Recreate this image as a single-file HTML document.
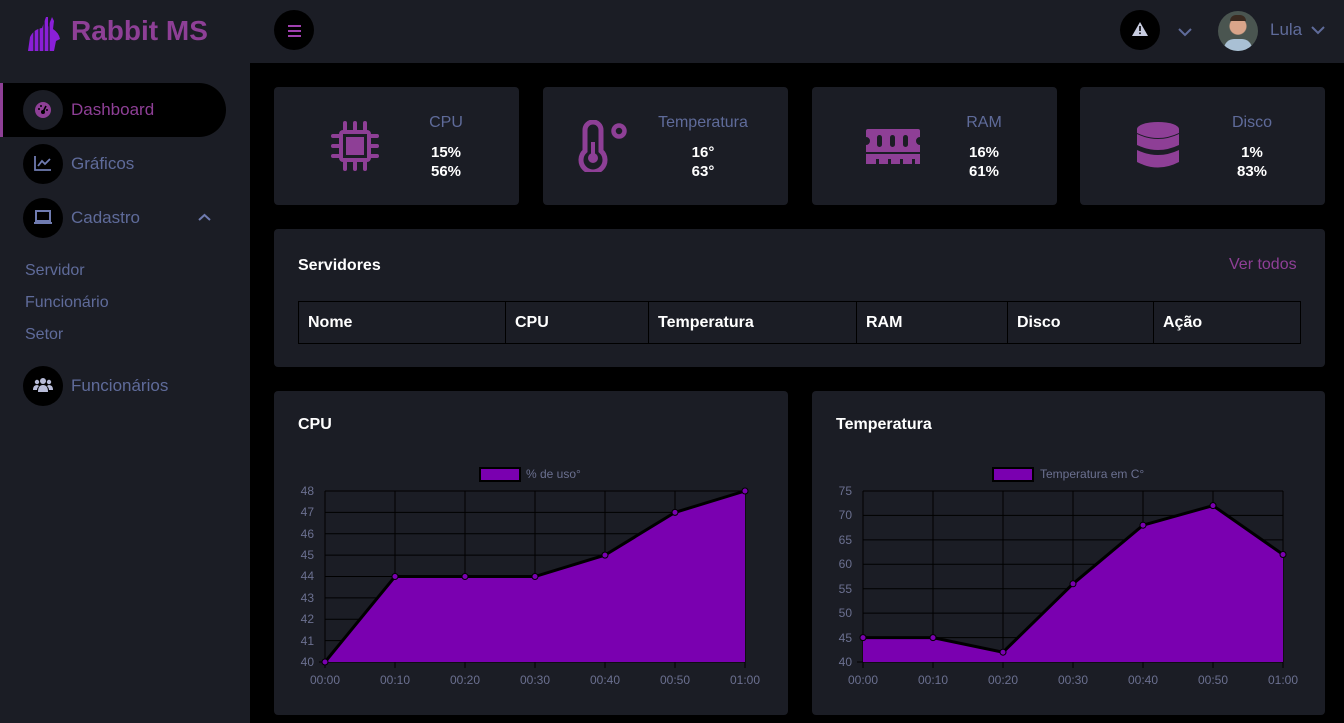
<!DOCTYPE html>
<html><head><meta charset="utf-8"><style>
*{margin:0;padding:0;box-sizing:border-box}
body{width:1344px;height:723px;overflow:hidden;background:#1b1d25;font-family:"Liberation Sans",sans-serif;position:relative}
.a{position:absolute}
.main{left:250px;top:63px;width:1094px;height:660px;background:#000}
.card{background:#1b1d25;border-radius:4px}
.circ{border-radius:50%;background:#000}
.nav{color:#5f6b9a;font-size:17px}
.lbl{color:#5f6b9a;font-size:16px;text-align:center;width:120px}
.val{color:#fff;font-weight:bold;font-size:15px;text-align:center;width:120px;line-height:19px}
th{color:#fff;font-size:16px;text-align:left;font-weight:bold;border:1px solid #000;padding-left:9px;height:42px}
</style></head><body>
<!-- logo -->
<svg class="a" style="left:26px;top:13px" width="36" height="40" viewBox="0 0 36 40"><path d="M2 38 L4 24 Q8 16 16 15 L20 4 L22 4 L22 14 L26 4 L28 8 L27 16 Q33 20 34 26 L30 28 L28 38 Z" fill="#8a1fd8"/><g stroke="#1b1d25" stroke-width="1.3"><line x1="8" y1="16" x2="8" y2="40"/><line x1="13" y1="12" x2="13" y2="40"/><line x1="18" y1="4" x2="18" y2="40"/><line x1="23" y1="4" x2="23" y2="40"/></g></svg>
<div class="a" style="left:71px;top:15px;font-size:28px;font-weight:bold;color:#8e3f96">Rabbit MS</div>
<div class="a circ" style="left:274px;top:10px;width:40px;height:40px"></div>
<div class="a" style="left:288px;top:25px;width:13px;height:2px;background:#a040b0;box-shadow:0 5px 0 #a040b0,0 10px 0 #a040b0"></div>
<!-- top right -->
<div class="a circ" style="left:1120px;top:10px;width:40px;height:40px"></div>
<svg class="a" style="left:1131px;top:21px" width="18" height="16" viewBox="0 0 18 16"><path d="M9 1 L17 15 L1 15 Z" fill="#c8cce0"/><rect x="8.2" y="5" width="1.6" height="5" fill="#000"/><rect x="8.2" y="11.5" width="1.6" height="1.6" fill="#000"/></svg>
<svg class="a" style="left:1178px;top:28px" width="14" height="9"><path d="M1 1 L7 7 L13 1" stroke="#5f6b9a" stroke-width="2" fill="none"/></svg>
<div class="a" style="left:1218px;top:11px;width:40px;height:40px;border-radius:50%;background:radial-gradient(circle at 50% 38%,#d9a58a 0 8px,#4a5550 9px);overflow:hidden"><div style="position:absolute;left:6px;top:28px;width:28px;height:14px;border-radius:10px 10px 0 0;background:#a9c0d4"></div><div style="position:absolute;left:12px;top:4px;width:16px;height:6px;border-radius:6px 6px 0 0;background:#3a2a20"></div></div>
<div class="a nav" style="left:1270px;top:20px">Lula</div>
<svg class="a" style="left:1311px;top:26px" width="14" height="9"><path d="M1 1 L7 7 L13 1" stroke="#5f6b9a" stroke-width="2" fill="none"/></svg>
<!-- sidebar -->
<div class="a" style="left:0;top:83px;width:226px;height:54px;background:#000;border-radius:0 27px 27px 0;border-left:3px solid #8e3f96"></div>
<div class="a circ" style="left:23px;top:90px;width:40px;height:40px;background:#1b1d25"></div>
<svg class="a" style="left:34px;top:101px" width="18" height="18" viewBox="0 0 18 18"><circle cx="9" cy="9" r="8" fill="#8e3f96"/><circle cx="9" cy="11" r="2" fill="#000"/><line x1="9" y1="11" x2="12" y2="5" stroke="#000" stroke-width="1.6"/><circle cx="5" cy="8" r="1" fill="#000"/><circle cx="7" cy="5" r="1" fill="#000"/><circle cx="13" cy="9" r="1" fill="#000"/></svg>
<div class="a" style="left:71px;top:100px;font-size:17px;color:#8e3f96">Dashboard</div>
<div class="a circ" style="left:23px;top:144px;width:40px;height:40px"></div>
<svg class="a" style="left:34px;top:155px" width="18" height="16"><path d="M1 1 V15 H17 M4 11 L8 6 L11 9 L16 4" stroke="#6f7bb0" stroke-width="1.8" fill="none"/></svg>
<div class="a nav" style="left:71px;top:154px">Gráficos</div>
<div class="a circ" style="left:23px;top:198px;width:40px;height:40px"></div>
<svg class="a" style="left:33px;top:210px" width="20" height="15"><rect x="3" y="1" width="14" height="10" stroke="#6f7bb0" stroke-width="2" fill="none"/><rect x="1" y="12" width="18" height="2" fill="#6f7bb0"/></svg>
<div class="a nav" style="left:71px;top:208px">Cadastro</div>
<svg class="a" style="left:198px;top:213px" width="13" height="9"><path d="M1 7 L6.5 2 L12 7" stroke="#6f7bb0" stroke-width="2" fill="none"/></svg>
<div class="a nav" style="left:25px;top:262px;font-size:16px">Servidor</div>
<div class="a nav" style="left:25px;top:294px;font-size:16px">Funcionário</div>
<div class="a nav" style="left:25px;top:326px;font-size:16px">Setor</div>
<div class="a circ" style="left:23px;top:366px;width:40px;height:40px"></div>
<svg class="a" style="left:33px;top:377px" width="20" height="16" viewBox="0 0 20 16"><circle cx="10" cy="4" r="3" fill="#b8bcd8"/><circle cx="4" cy="5" r="2.2" fill="#b8bcd8"/><circle cx="16" cy="5" r="2.2" fill="#b8bcd8"/><path d="M5 15 Q5 8 10 8 Q15 8 15 15Z M0 13 Q0 8 4 8 Q5 8 6 9 Q4 11 4 13Z M20 13 Q20 8 16 8 Q15 8 14 9 Q16 11 16 13Z" fill="#b8bcd8"/></svg>
<div class="a nav" style="left:71px;top:376px">Funcionários</div>
<!-- main -->
<div class="a main"></div>
<div class="a card" style="left:274px;top:87px;width:245px;height:118px"></div>
<div class="a card" style="left:543px;top:87px;width:245px;height:118px"></div>
<div class="a card" style="left:812px;top:87px;width:245px;height:118px"></div>
<div class="a card" style="left:1080px;top:87px;width:245px;height:118px"></div>
<!-- cpu icon -->
<svg class="a" style="left:331px;top:121px" width="48" height="50" viewBox="0 0 48 50"><g fill="#8e3f96"><rect x="8" y="9" width="32" height="32" rx="4"/><rect x="12" y="0" width="4" height="50" rx="2"/><rect x="22" y="0" width="4" height="50" rx="2"/><rect x="32" y="0" width="4" height="50" rx="2"/><rect x="0" y="13" width="48" height="4" rx="2"/><rect x="0" y="23" width="48" height="4" rx="2"/><rect x="0" y="33" width="48" height="4" rx="2"/></g><rect x="12" y="13" width="24" height="24" fill="#1b1d25"/><rect x="15" y="16" width="18" height="18" fill="#8e3f96"/></svg>
<div class="a lbl" style="left:386px;top:114px">CPU</div>
<div class="a val" style="left:386px;top:143px">15%<br>56%</div>
<!-- thermo -->
<svg class="a" style="left:575px;top:120px" width="54" height="52" viewBox="0 0 54 52"><path d="M10 31 V10 a8 8 0 0 1 16 0 V31 a12 12 0 1 1 -16 0Z" stroke="#8e3f96" stroke-width="5" fill="none"/><circle cx="18" cy="38" r="5" fill="#8e3f96"/><rect x="16" y="22" width="4" height="16" fill="#8e3f96"/><circle cx="44" cy="11" r="5.5" stroke="#8e3f96" stroke-width="4.5" fill="none"/></svg>
<div class="a lbl" style="left:643px;top:114px">Temperatura</div>
<div class="a val" style="left:643px;top:143px">16°<br>63°</div>
<!-- ram -->
<svg class="a" style="left:865px;top:127px" width="56" height="38" viewBox="0 0 56 38"><path d="M3 2 H53 a2 2 0 0 1 2 2 V10 a4 4 0 0 0 0 8 V25 H1 V18 a4 4 0 0 0 0 -8 V4 a2 2 0 0 1 2 -2Z" fill="#8e3f96"/><rect x="1" y="27" width="54" height="10" fill="#8e3f96"/><g fill="#1b1d25"><rect x="12" y="8" width="5" height="12" rx="2.5"/><rect x="25" y="8" width="5" height="12" rx="2.5"/><rect x="38" y="8" width="5" height="12" rx="2.5"/><rect x="11" y="32" width="3" height="5"/><rect x="23" y="32" width="3" height="5"/><rect x="35" y="32" width="3" height="5"/><rect x="47" y="32" width="3" height="5"/></g></svg>
<div class="a lbl" style="left:924px;top:114px">RAM</div>
<div class="a val" style="left:924px;top:143px">16%<br>61%</div>
<!-- disk -->
<svg class="a" style="left:1136px;top:121px" width="44" height="50" viewBox="0 0 44 50"><g fill="#8e3f96"><ellipse cx="22" cy="8" rx="21" ry="7"/><path d="M1 13 Q22 23 43 13 V24 Q22 34 1 24Z"/><path d="M1 29 Q22 39 43 29 V41 Q22 52 1 41Z"/><path d="M1 8 V12 Q22 22 43 12 V8Z"/></g></svg>
<div class="a lbl" style="left:1192px;top:114px">Disco</div>
<div class="a val" style="left:1192px;top:143px">1%<br>83%</div>
<!-- servidores -->
<div class="a card" style="left:274px;top:229px;width:1051px;height:138px"></div>
<div class="a" style="left:298px;top:257px;color:#fff;font-weight:bold;font-size:16px">Servidores</div>
<div class="a" style="left:1229px;top:256px;color:#8e3f96;font-size:16px">Ver todos</div>
<table class="a" style="left:298px;top:301px;width:1003px;border-collapse:collapse;border:1px solid #000">
<tr><th style="width:207px">Nome</th><th style="width:143px">CPU</th><th style="width:208px">Temperatura</th><th style="width:151px">RAM</th><th style="width:146px">Disco</th><th>Ação</th></tr></table>
<!-- charts -->
<div class="a card" style="left:274px;top:391px;width:514px;height:324px"></div>
<div class="a card" style="left:812px;top:391px;width:513px;height:324px"></div>
<div class="a" style="left:298px;top:416px;color:#fff;font-weight:bold;font-size:16px">CPU</div>
<div class="a" style="left:836px;top:416px;color:#fff;font-weight:bold;font-size:16px">Temperatura</div>
<svg class="a" style="left:0;top:0" width="1344" height="723" font-family="Liberation Sans" font-size="12" fill="#6b7090">
<g stroke="#000" stroke-width="1">
<path d="M325 491H745M325 512.4H745M325 533.8H745M325 555.1H745M325 576.5H745M325 597.9H745M325 619.3H745M325 640.6H745M319 662H745M325 491V668M395 491V668M465 491V668M535 491V668M605 491V668M675 491V668M745 491V668"/>
<path d="M863 491H1283M863 515.4H1283M863 539.9H1283M863 564.3H1283M863 588.7H1283M863 613.1H1283M863 637.6H1283M857 662H1283M863 491V668M933 491V668M1003 491V668M1073 491V668M1143 491V668M1213 491V668M1283 491V668"/>
</g>
<rect x="480" y="468" width="40" height="13" fill="#7a00b0" stroke="#000" stroke-width="2"/>
<text x="526" y="478">% de uso°</text>
<rect x="993" y="468" width="40" height="13" fill="#7a00b0" stroke="#000" stroke-width="2"/>
<text x="1040" y="478">Temperatura em C°</text>
<path d="M325 662L395 576.5L465 576.5L535 576.5L605 555.1L675 512.4L745 491V662Z" fill="#7a00b0"/>
<path d="M325 662L395 576.5L465 576.5L535 576.5L605 555.1L675 512.4L745 491" stroke="#000" stroke-width="3" fill="none"/>
<path d="M863 637.6L933 637.6L1003 652.2L1073 583.8L1143 525.2L1213 505.6L1283 554.5V662H863Z" fill="#7a00b0"/>
<path d="M863 637.6L933 637.6L1003 652.2L1073 583.8L1143 525.2L1213 505.6L1283 554.5" stroke="#000" stroke-width="3" fill="none"/>
<g fill="#7a00b0" stroke="#000">
<circle cx="325" cy="662" r="3"/><circle cx="395" cy="576.5" r="3"/><circle cx="465" cy="576.5" r="3"/><circle cx="535" cy="576.5" r="3"/><circle cx="605" cy="555.1" r="3"/><circle cx="675" cy="512.4" r="3"/><circle cx="745" cy="491" r="3"/>
<circle cx="863" cy="637.6" r="3"/><circle cx="933" cy="637.6" r="3"/><circle cx="1003" cy="652.2" r="3"/><circle cx="1073" cy="583.8" r="3"/><circle cx="1143" cy="525.2" r="3"/><circle cx="1213" cy="505.6" r="3"/><circle cx="1283" cy="554.5" r="3"/>
</g>
<g text-anchor="end">
<text x="314" y="495">48</text><text x="314" y="516">47</text><text x="314" y="538">46</text><text x="314" y="559">45</text><text x="314" y="580">44</text><text x="314" y="602">43</text><text x="314" y="623">42</text><text x="314" y="645">41</text><text x="314" y="666">40</text>
<text x="852" y="495">75</text><text x="852" y="519">70</text><text x="852" y="544">65</text><text x="852" y="568">60</text><text x="852" y="593">55</text><text x="852" y="617">50</text><text x="852" y="642">45</text><text x="852" y="666">40</text>
</g>
<g text-anchor="middle">
<text x="325" y="684">00:00</text><text x="395" y="684">00:10</text><text x="465" y="684">00:20</text><text x="535" y="684">00:30</text><text x="605" y="684">00:40</text><text x="675" y="684">00:50</text><text x="745" y="684">01:00</text>
<text x="863" y="684">00:00</text><text x="933" y="684">00:10</text><text x="1003" y="684">00:20</text><text x="1073" y="684">00:30</text><text x="1143" y="684">00:40</text><text x="1213" y="684">00:50</text><text x="1283" y="684">01:00</text>
</g>
</svg>
</body></html>
